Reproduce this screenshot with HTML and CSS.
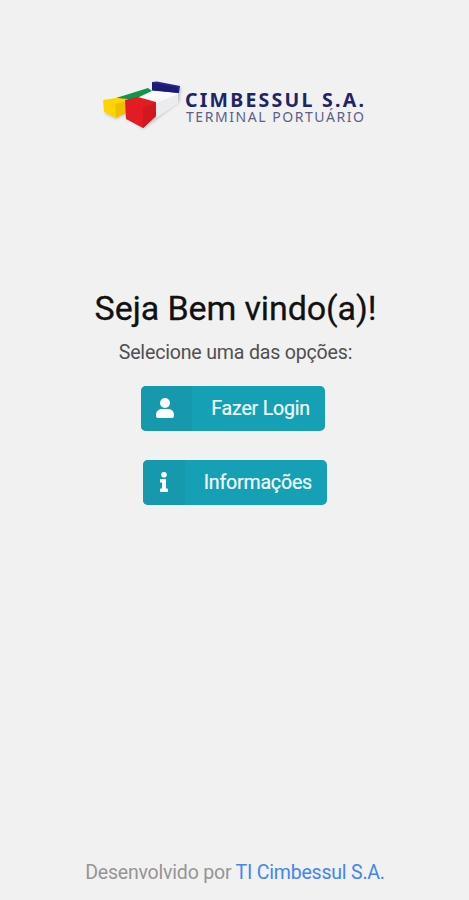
FILE: index.html
```html
<!DOCTYPE html>
<html lang="pt-BR">
<head>
<meta charset="utf-8">
<meta name="viewport" content="width=device-width, initial-scale=1">
<title>Cimbessul S.A.</title>
<link rel="stylesheet" href="styles.css">
</head>
<body>
<main class="page">
  <svg class="logo" viewBox="0 0 280 70" role="img" aria-label="Cimbessul S.A. Terminal Portuário">
    <path class="shadow" d="M9 43 21 49 31 44 48 59 63 48 84 32 86 17 57 21Z"/>
    <path fill="#149447" d="M21 28 53 18 57 21 56 23 42 29 32 30Z"/>
    <path fill="#ffd500" d="M8 30 21 28 33 29 31 43 21 48 9 42Z"/>
    <path fill="#efbf00" d="M20 34 31 31 31 43 21 48Z"/>
    <path fill="#fafafa" d="M42 28 58 20.500 83 23 83 33 61 48 59 33Z"/>
    <path fill="#ececf0" d="M61 33 83 24 83 33 61 48Z"/>
    <path fill="#27278c" d="M57 12 62 11.500 85 16 84 23 57 20.500Z"/>
    <path fill="#1b1b75" d="M57 13 82 17 84 23 57 20Z"/>
    <path fill="#e31b23" d="M30 30 43 27 61 32 61 46 48 58 31 49Z"/>
    <path fill="#d2181f" d="M48 38 61 32 61 46 48 58Z"/>
    <text class="logo-name" x="90" y="36.500" textLength="179">CIMBESSUL S.A.</text>
    <text class="logo-sub" x="91" y="52" textLength="178">TERMINAL PORTUÁRIO</text>
  </svg>
  <h1 class="title">Seja Bem vindo(a)!</h1>
  <p class="subtitle">Selecione uma das opções:</p>
  <nav class="actions">
    <a class="button login">
      <span class="icon"><svg width="18" height="20" viewBox="0 0 18 20"><circle cx="9" cy="5" r="5"/><path d="M5 11h8q5 1 5 6v1q0 2-2 2H2q-2 0-2-2v-1q0-5 5-6Z"/></svg></span>
      <span class="label">Fazer Login</span>
    </a>
    <a class="button info">
      <span class="icon"><svg width="8" height="20" viewBox="0 0 8 20"><circle cx="4" cy="2.800" r="2.800"/><path d="M.7 7H6v9.500h1.300q.7 0 .7.700v2.100q0 .7-.7.700H.7q-.7 0-.7-.7v-2.100q0-.7.7-.7H2v-6H.7q-.7 0-.7-.7V7.700Q0 7 .7 7Z"/></svg></span>
      <span class="label">Informações</span>
    </a>
  </nav>
  <footer class="footer">Desenvolvido por <a class="link">TI Cimbessul S.A.</a></footer>
</main>
</body>
</html>
```
FILE: styles.css
```css
* { box-sizing: border-box; }
body {
  margin: 0;
  background: #f1f1f1;
  font-family: Roboto, "Liberation Sans", sans-serif;
}
.page {
  height: 900px;
  padding-top: 70px;
  display: flex;
  flex-direction: column;
  align-items: center;
}
.logo {
  width: 280px;
  height: 70px;
  flex: none;
  align-self: flex-start;
  margin-left: 95px;
}
.shadow { fill: #777; opacity: .4; filter: blur(1.5px); }
.logo-name { font: 700 19.5px "Noto Sans", sans-serif; fill: #202466; }
.logo-sub { font: 400 14px "Noto Sans", sans-serif; fill: #5c6089; }
.title {
  margin: 148px 0 0;
  padding-left: 2px;
  font-size: 34px;
  font-weight: 400;
  line-height: 40px;
  letter-spacing: -.1px;
  color: #111;
  white-space: nowrap;
  -webkit-text-stroke: .3px #111;
}
.subtitle {
  margin: 13px 0 0;
  padding-left: 2px;
  font-size: 19.600px;
  line-height: 24px;
  letter-spacing: -.2px;
  color: #505050;
  white-space: nowrap;
}
.actions {
  margin: 20.500px 0 0 140.500px;
  align-self: flex-start;
  display: flex;
  flex-direction: column;
  gap: 28.500px;
}
.button {
  width: 184.500px;
  height: 45.500px;
  display: flex;
  border-radius: 5px;
  overflow: hidden;
  background: #16a0b6;
  color: #f4fcfd;
}
.info { margin-left: 2px; }
.icon {
  width: 51px;
  display: flex;
  align-items: center;
  justify-content: center;
  background: #1698ad;
}
.login .icon { padding-right: 2px; }
.info .icon { width: 42px; }
.icon svg { fill: #fff; }
.label {
  flex: 1;
  padding-right: 15px;
  text-align: right;
  font-size: 19.600px;
  line-height: 45px;
  letter-spacing: -.2px;
  white-space: nowrap;
  -webkit-text-stroke: .2px #f4fcfd;
}
.footer {
  margin-top: auto;
  padding: 0 0 15px 1px;
  font-size: 19.500px;
  line-height: 24px;
  letter-spacing: -.2px;
  color: #959595;
  white-space: nowrap;
}
.link { color: #4285f4; }
```
